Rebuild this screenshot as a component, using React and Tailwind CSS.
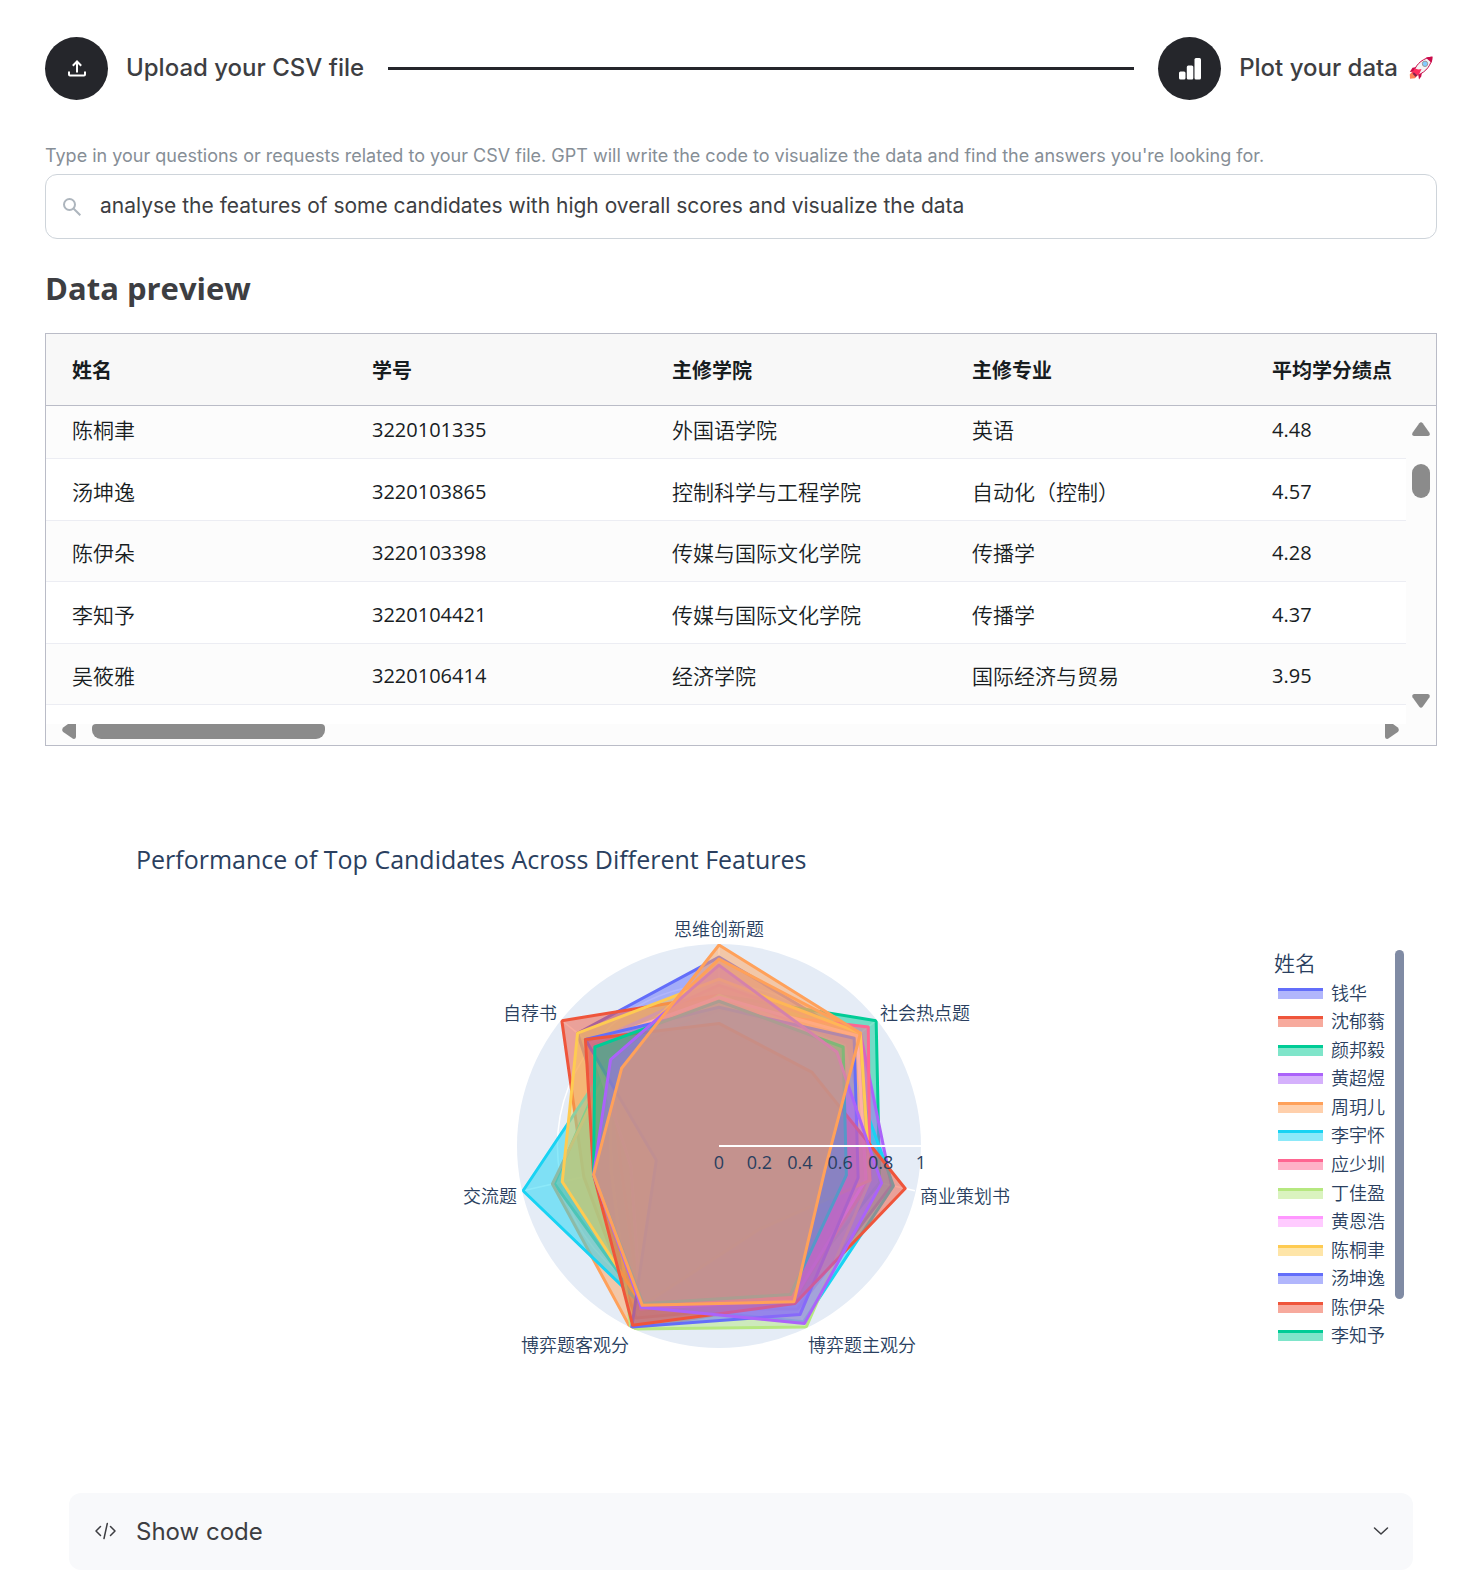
import React from "react";

const UI = "font-['Inter','Noto_Sans_CJK_SC',sans-serif]";
const DATA = "font-['Open_Sans','Noto_Sans_CJK_SC',sans-serif]";

const columns = ["姓名", "学号", "主修学院", "主修专业", "平均学分绩点"];
const students = [
  ["陈桐聿", "3220101335", "外国语学院", "英语", "4.48"],
  ["汤坤逸", "3220103865", "控制科学与工程学院", "自动化（控制）", "4.57"],
  ["陈伊朵", "3220103398", "传媒与国际文化学院", "传播学", "4.28"],
  ["李知予", "3220104421", "传媒与国际文化学院", "传播学", "4.37"],
  ["吴筱雅", "3220106414", "经济学院", "国际经济与贸易", "3.95"],
];

const palette = [
  "#636efa", "#ef553b", "#00cc96", "#ab63fa", "#ffa15a",
  "#19d3f3", "#ff6692", "#b6e880", "#ff97ff", "#fecb52",
];
const names = [
  "钱华", "沈郁蓊", "颜邦毅", "黄超煜", "周玥儿", "李宇怀", "应少圳",
  "丁佳盈", "黄恩浩", "陈桐聿", "汤坤逸", "陈伊朵", "李知予",
];

// One row per candidate, clockwise from the top axis.
const scores = [
  [0.94, 0.86, 0.75, 0.8, 0.9, 0.5, 0.9],
  [0.75, 0.75, 0.7, 0.87, 0.95, 0.69, 1.0],
  [0.75, 1.0, 0.82, 0.82, 0.88, 0.84, 0.7],
  [0.8, 0.9, 0.88, 0.9, 0.9, 0.64, 0.82],
  [0.93, 0.9, 0.7, 0.86, 1.01, 0.85, 0.68],
  [0.7, 0.79, 0.89, 0.97, 0.88, 1.0, 0.69],
  [0.68, 0.95, 0.77, 0.85, 0.9, 0.5, 0.7],
  [0.75, 0.8, 0.77, 1.0, 1.01, 0.55, 0.7],
  [0.74, 0.88, 0.75, 0.85, 0.9, 0.45, 0.82],
  [0.83, 0.9, 0.77, 0.46, 0.88, 0.8, 0.9],
  [0.69, 0.86, 0.71, 0.93, 1.0, 0.32, 0.85],
  [0.61, 0.59, 0.95, 0.87, 0.99, 0.64, 0.85],
  [0.72, 0.79, 0.65, 0.82, 0.87, 0.64, 0.79],
  [0.9, 0.75, 0.83, 0.98, 0.89, 0.64, 0.69],
  [1.0, 0.9, 0.54, 0.86, 0.88, 0.64, 0.62],
];

const axisLabels = [
  { text: "思维创新题", x: 300, y: 16, anchor: "middle" },
  { text: "社会热点题", x: 461, y: 100, anchor: "start" },
  { text: "商业策划书", x: 501, y: 283, anchor: "start" },
  { text: "博弈题主观分", x: 389, y: 432, anchor: "start" },
  { text: "博弈题客观分", x: 210, y: 432, anchor: "end" },
  { text: "交流题", x: 98, y: 283, anchor: "end" },
  { text: "自荐书", x: 138, y: 100, anchor: "end" },
];

const CX = 300;
const CY = 226;
const R = 202;
const SCALE = 201;

function point(axis, r) {
  const a = (axis * 2 * Math.PI) / 7;
  return [CX + SCALE * r * Math.sin(a), CY - SCALE * r * Math.cos(a)];
}

function Radar() {
  return (
    <svg viewBox="0 -10 600 470" className="h-[470px] w-[600px] shrink-0" role="img" aria-label="Radar chart of candidate scores">
      <defs>
        <clipPath id="disc">
          <circle cx={CX} cy={CY} r={R} />
        </clipPath>
      </defs>
      <circle cx={CX} cy={CY} r={R} fill="#e5ecf6" />
      {[0.2, 0.4, 0.6, 0.8].map((r) => (
        <circle key={r} cx={CX} cy={CY} r={R * r} fill="none" stroke="#fff" strokeWidth="1.5" />
      ))}
      {[0, 1, 2, 3, 4, 5, 6].map((k) => {
        const [x, y] = point(k, 1);
        return <line key={k} x1={CX} y1={CY} x2={x} y2={y} stroke="#fff" strokeWidth="1.5" />;
      })}
      <g clipPath="url(#disc)" strokeWidth="3" strokeLinejoin="round">
        {scores.map((row, i) => (
          <polygon
            key={i}
            points={row.map((r, k) => point(k, r).join(",")).join(" ")}
            fill={palette[i % 10]}
            fillOpacity="0.5"
            stroke={palette[i % 10]}
          />
        ))}
      </g>
      <line x1={CX} y1={CY} x2={CX + R} y2={CY} stroke="#fff" strokeWidth="2" />
      <g fill="#2a3f5f" fontSize="18">
        {["0", "0.2", "0.4", "0.6", "0.8", "1"].map((t, i) => (
          <text key={t} x={CX + (R * i) / 5} y="249" textAnchor="middle">{t}</text>
        ))}
        {axisLabels.map((l) => (
          <text key={l.text} x={l.x} y={l.y} textAnchor={l.anchor} fontWeight="350">{l.text}</text>
        ))}
      </g>
    </svg>
  );
}

function Legend() {
  return (
    <div className="flex w-[147px] shrink-0 pt-10">
      <div className="w-[121px]">
        <p className="pb-[3px] text-[21px] leading-[26px] font-[350]">姓名</p>
        <ul className="grid h-[371px] auto-rows-fr">
          {names.map((n, i) => (
            <li key={n} className="flex items-center gap-2 pl-1 text-[18px] leading-none font-[350]">
              <svg viewBox="0 0 45 12" className="h-3 w-[45px]" aria-hidden="true">
                <rect y="1" width="45" height="11" fill={palette[i % 10]} fillOpacity="0.5" />
                <rect y="1" width="45" height="3" fill={palette[i % 10]} />
              </svg>
              {n}
            </li>
          ))}
        </ul>
      </div>
      <div className="h-[349px] w-[9px] rounded-full bg-[#808ba4]" />
    </div>
  );
}

function Rocket() {
  return (
    <svg viewBox="0 0 24 24" className="h-6 w-6" role="img" aria-label="rocket">
      <path d="M5 14 0.8 18.2 1 22.8 6 22.2 9 18.5z" fill="#ff8257" />
      <path d="M7.5 11 3.5 11.8 0.8 16 6 15.5z" fill="#ca0b4a" />
      <path d="M13 16.5 12.2 20.5 10 23.5 9.2 18z" fill="#ca0b4a" />
      <path d="M5 15.5C7 7.500 15.500 1.500 22.800 1.200 22.800 8.500 17 16 9 19z" fill="#f4f4f4" stroke="#ca0b4a" strokeWidth="1" />
      <path d="M16.800 1.800C19 1 21.500 0.700 23.600 0.500 23.600 2.500 23.200 4.800 22.500 6.800z" fill="#ca0b4a" />
      <path d="M5.800 12.500 9.500 13.500 12.500 13 10.500 17.500 6 21.500 5.500 18 2.500 17.500z" fill="#ff2d5f" />
      <path d="M4.800 16.200 8.500 19.600 6.500 20.800 3.800 18z" fill="#86234c" />
      <circle cx="16" cy="7.800" r="2.700" fill="#83cbff" stroke="#9b9b9b" strokeWidth="1" />
    </svg>
  );
}

function Step({ icon, children }) {
  return (
    <div className="flex shrink-0 items-center gap-[18px]">
      <div className="flex size-[63px] items-center justify-center rounded-full bg-[#25262b] text-white">{icon}</div>
      <span className="flex items-center gap-[11px] pb-0.5 text-[24px] leading-[36px] font-medium">{children}</span>
    </div>
  );
}

function ScrollArrow({ className }) {
  return (
    <svg viewBox="0 0 18 14" className={className} fill="#8b8b8b" aria-hidden="true">
      <path d="M7.300 1.200Q9-0.800 10.700 1.200L17.500 10.800Q18.500 13.500 16 14H2Q-0.500 13.500 0.500 10.800z" />
    </svg>
  );
}

function rowClass(i) {
  if (i === 0) return "h-[53px] border-b border-[#ecedf3] bg-[#fcfcfc]";
  if (i % 2 === 0) return "h-[61px] border-b border-[#ecedf3] bg-[#fcfcfc]";
  return "h-[62px] border-b border-[#ecedf3]";
}

export default function App() {
  return (
    <main className={`${UI} bg-white pr-[31px] pl-[45px] pt-[37px] pb-[14px] text-[#3d3e42]`}>
      <div className="flex items-center gap-6 pr-1">
        <Step
          icon={
            <svg viewBox="0 0 18 18" className="size-[18px]" fill="none" stroke="currentColor" strokeWidth="2" aria-hidden="true">
              <path d="M9 12.500V2M4.800 5.700 9 1.500 13.200 5.700M1 11.500V14.500Q1 15.500 2 15.500H16Q17 15.500 17 14.500V11.500" />
            </svg>
          }
        >
          Upload your CSV file
        </Step>
        <div className="h-[3px] flex-1 bg-[#25262b]" />
        <Step
          icon={
            <svg viewBox="0 0 22 22" className="size-[22px]" fill="currentColor" aria-hidden="true">
              <rect x="0" y="13.500" width="6.500" height="8" rx="1.500" />
              <rect x="7.800" y="7.500" width="6.500" height="14" rx="1.500" />
              <rect x="15.500" y="0" width="6.500" height="21.500" rx="1.500" />
            </svg>
          }
        >
          Plot your data
          <Rocket />
        </Step>
      </div>

      <label htmlFor="query" className="mt-[43px] block text-[18px] leading-[26px] text-[#868e96]">
        Type in your questions or requests related to your CSV file. GPT will write the code to visualize the data and find the answers you're looking for.
      </label>
      <div className="mt-[5px] flex h-[65px] items-center gap-[19px] rounded-xl border border-[#ced4da] px-[17px]">
        <svg viewBox="0 0 18 18" className="size-[18px] shrink-0" fill="none" stroke="#adb5bd" strokeWidth="2" aria-hidden="true">
          <circle cx="6.500" cy="6.500" r="5.500" />
          <path d="M10.500 10.500 17.300 17.300" />
        </svg>
        <input
          id="query"
          type="text"
          defaultValue="analyse the features of some candidates with high overall scores and visualize the data"
          className="w-full pb-0.5 text-[21px] outline-none"
        />
      </div>

      <h2 className={`${DATA} mt-6 text-[31px] leading-[50px] font-bold`}>Data preview</h2>

      <div className={`${DATA} mt-5 border border-[#babcc7] text-[#181d1f]`}>
        <div className="relative">
          <table className="w-full table-fixed border-collapse text-left">
            <colgroup>
              <col className="w-[300px]" />
              <col className="w-[300px]" />
              <col className="w-[300px]" />
              <col className="w-[300px]" />
              <col />
            </colgroup>
            <thead>
              <tr className="h-[71px] border-b border-[#babcc7] bg-[#f8f8f8]">
                {columns.map((c) => (
                  <th key={c} className="pt-1 pl-[26px] text-[20px] leading-7 font-bold whitespace-nowrap">{c}</th>
                ))}
              </tr>
            </thead>
            <tbody>
              {students.map((row, r) => (
                <tr key={row[1]} className={rowClass(r)}>
                  {row.map((cell, i) => (
                    <td
                      key={i}
                      className={
                        i === 1 || i === 4
                          ? "pb-[14px] pl-[26px] align-bottom text-[20px] leading-7"
                          : "pb-[14px] pl-[26px] align-bottom text-[21px] leading-7 font-[350]"
                      }
                    >
                      {cell}
                    </td>
                  ))}
                </tr>
              ))}
            </tbody>
          </table>
          <div className="h-[19px]" />
          <div className="absolute top-[72px] right-0 bottom-0 flex w-[30px] flex-col items-center bg-[#fcfcfc] py-4">
            <ScrollArrow className="h-3.5 w-[18px]" />
            <div className="mt-7 h-[34px] w-[18px] rounded-full bg-[#8b8b8b]" />
            <ScrollArrow className="mt-auto h-3.5 w-[18px] rotate-180" />
          </div>
        </div>
        <div className="flex h-[21px] items-start bg-[#fcfcfc] pr-[37px] pl-4">
          <svg viewBox="0 0 14 15" className="h-[15px] w-3.5" fill="#8b8b8b" aria-hidden="true">
            <path d="M6 0H14V13Q13.500 15.500 11 14.800L1.200 8Q-0.800 6 1.200 3.500z" />
          </svg>
          <div className="ml-4 h-[15px] w-[233px] rounded-b-[9px] rounded-t-[4px] bg-[#8b8b8b]" />
          <svg viewBox="0 0 14 15" className="ml-auto h-[15px] w-3.5" fill="#8b8b8b" aria-hidden="true">
            <path d="M8 0H0V13Q0.500 15.500 3 14.800L12.800 8Q14.800 6 12.800 3.500z" />
          </svg>
        </div>
      </div>

      <section className={`${DATA} pt-[95px] text-[#2a3f5f]`}>
        <h3 className="pl-[91px] text-[25px] leading-9">Performance of Top Candidates Across Different Features</h3>
        <div className="mt-[33px] flex pr-4 pl-[118px]">
          <div className="flex flex-1 justify-center">
            <Radar />
          </div>
          <Legend />
        </div>
      </section>

      <button type="button" className="mx-6 mt-[113px] flex h-[77px] w-[calc(100%-48px)] items-center rounded-xl bg-[#f8f9fb] px-6 text-[24px]">
        <svg viewBox="0 0 24 24" className="size-6" fill="none" stroke="currentColor" strokeWidth="1.500" strokeLinecap="round" strokeLinejoin="round" aria-hidden="true">
          <path d="M7.500 7.500 3 12l4.500 4.500M17.500 7.500 22 12l-4.500 4.500M14.300 4.500 11 19.500" />
        </svg>
        <span className="ml-[19px] pt-0.5">Show code</span>
        <svg viewBox="0 0 16 10" className="ml-auto h-2.5 w-4" fill="none" stroke="currentColor" strokeWidth="1.500" strokeLinecap="round" strokeLinejoin="round" aria-hidden="true">
          <path d="M1.500 2 8 8l6.500-6" />
        </svg>
      </button>
    </main>
  );
}
